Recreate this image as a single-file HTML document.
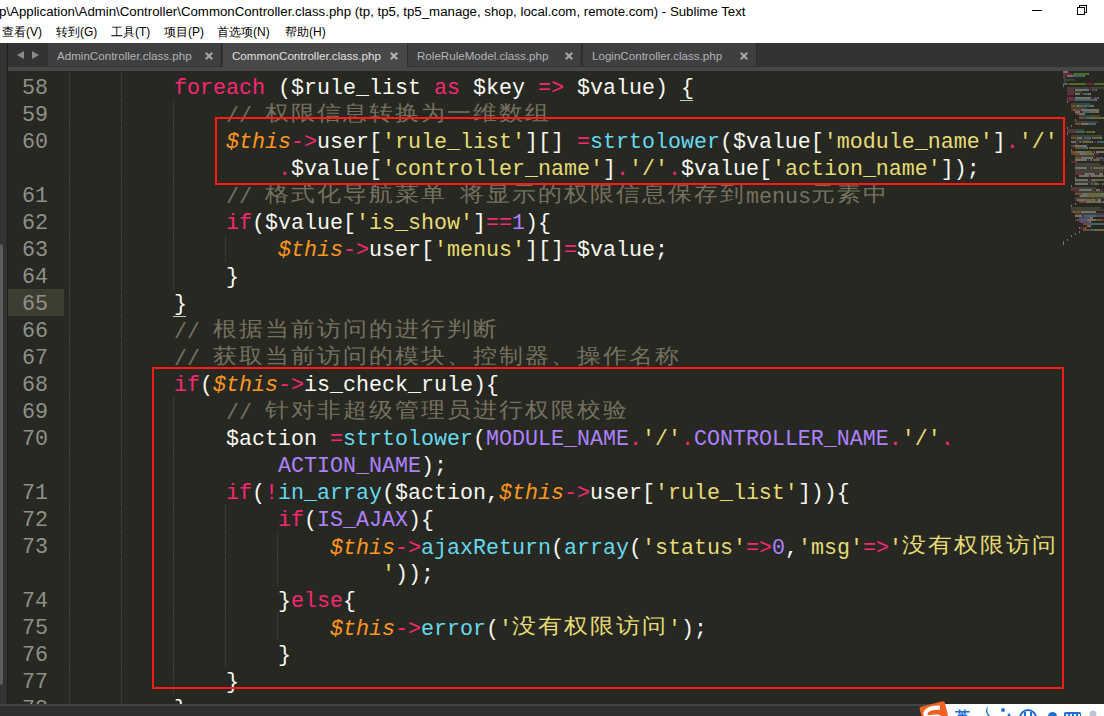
<!DOCTYPE html>
<html><head><meta charset="utf-8">
<style>
*{margin:0;padding:0;box-sizing:border-box}
html,body{width:1104px;height:716px;overflow:hidden;background:#272822;position:relative;font-family:"Liberation Sans",sans-serif}
#title{position:absolute;left:0;top:0;width:1104px;height:43px;background:#fff}
#ttl{position:absolute;left:-1px;top:4px;font-size:13.25px;color:#000;white-space:nowrap}
.mn{position:absolute;top:24px;font-size:12px;color:#000;white-space:nowrap}
#strip{position:absolute;left:0;top:43px;width:8px;height:661px;background:#333333;border-right:1px solid #1f1f1f}
#sb{position:absolute;left:0;top:244px;width:3px;height:441px;background:#5c5c5c;border-radius:0 3px 3px 0}
#tabbar{position:absolute;left:8px;top:43px;width:1096px;height:24px;background:#333333}
#arrows{position:absolute;left:8px;top:43px;width:40px;height:24px;background:#333}
.tab{position:absolute;top:43px;height:23px;background:#3f3f3f;border-right:1px solid #2a2a2a;font-size:11.6px;color:#b0b4b8;white-space:nowrap}
.tab.act{background:#484848;color:#e0e0e0;height:24px;border-right:1px solid #2e2e2e}
.tab span.x{position:absolute;top:5px;font-size:14px;font-weight:bold;color:#9a9a9a}
#band{position:absolute;left:8px;top:67px;width:1096px;height:4px;background:#474747}
#editor{position:absolute;left:8px;top:71px;width:1096px;height:633px;background:#272822;overflow:hidden}
#gutterhl{position:absolute;left:8px;top:289px;width:56px;height:27px;background:#3e3d32}
.ln{position:absolute;left:8px;width:40px;height:27px;line-height:27px;padding-top:2px;text-align:right;color:#8f908a;font-family:"Liberation Mono",monospace;font-size:21.66px}
.r{position:absolute;height:27px;line-height:27px;padding-top:2px;white-space:pre;color:#f8f8f2;font-family:"Liberation Mono",monospace;font-size:21.66px}
.g{position:absolute;width:1px;height:27px;background:repeating-linear-gradient(to bottom,#4b4b45 0,#4b4b45 1px,transparent 1px,transparent 2px)}
.k{color:#f92672}.s{color:#e6db74}.c{color:#75715e}.t{color:#fd971f;font-style:italic}.f{color:#66d9ef}.n{color:#ae81ff}
.ul{position:absolute;height:1px;width:13px;background:#c8c8c2}
.cj{font-size:24px;letter-spacing:2px;display:inline-block;transform:scaleY(0.88);transform-origin:50% 25%}
.box{position:absolute;border:2px solid #ff1a1a}
#status{position:absolute;left:0;top:704px;width:1104px;height:12px;background:#2f2f2f;border-top:2px solid #444}
#ime{position:absolute;left:944px;top:704px;width:166px;height:12px;background:#fff}
#minimap{position:absolute;left:1066px;top:71px;width:38px;height:180px}
</style></head><body>
<div id="title">
<div id="ttl">p\Application\Admin\Controller\CommonController.class.php (tp, tp5, tp5_manage, shop, local.com, remote.com) - Sublime Text</div>
<div style="position:absolute;left:1032px;top:10px;width:10px;height:1px;background:#000"></div>
<div style="position:absolute;left:1079px;top:5px;width:8px;height:8px;border:1px solid #000"></div>
<div style="position:absolute;left:1077px;top:7px;width:8px;height:8px;border:1px solid #000;background:#fff"></div>
<div class="mn" style="left:2px">查看(V)</div>
<div class="mn" style="left:56px">转到(G)</div>
<div class="mn" style="left:111px">工具(T)</div>
<div class="mn" style="left:164px">项目(P)</div>
<div class="mn" style="left:217px">首选项(N)</div>
<div class="mn" style="left:285px">帮助(H)</div>
</div>
<div id="tabbar"></div>
<div id="arrows">
<div style="position:absolute;left:9px;top:8px;width:0;height:0;border-top:4.5px solid transparent;border-bottom:4.5px solid transparent;border-right:7px solid #8a8a8a"></div>
<div style="position:absolute;left:24px;top:8px;width:0;height:0;border-top:4.5px solid transparent;border-bottom:4.5px solid transparent;border-left:7px solid #8a8a8a"></div>
</div>
<div class="tab" style="left:48px;width:174px;border-bottom-right-radius:3px"><span style="position:absolute;left:9px;top:6px">AdminController.class.php</span><svg style="position:absolute;left:157px;top:9px" width="8" height="8"><path d="M1.5 1.5L6.5 6.5M6.5 1.5L1.5 6.5" stroke="#a8a8a8" stroke-width="2" stroke-linecap="square"/></svg></div>
<div class="tab act" style="left:223px;width:185px"><span style="position:absolute;left:9px;top:6px">CommonController.class.php</span><svg style="position:absolute;left:167px;top:9px" width="8" height="8"><path d="M1.5 1.5L6.5 6.5M6.5 1.5L1.5 6.5" stroke="#b4b4b4" stroke-width="2" stroke-linecap="square"/></svg></div>
<div class="tab" style="left:408px;width:174px;border-bottom-left-radius:3px;border-bottom-right-radius:3px"><span style="position:absolute;left:9px;top:6px">RoleRuleModel.class.php</span><svg style="position:absolute;left:157px;top:9px" width="8" height="8"><path d="M1.5 1.5L6.5 6.5M6.5 1.5L1.5 6.5" stroke="#a8a8a8" stroke-width="2" stroke-linecap="square"/></svg></div>
<div class="tab" style="left:583px;width:174px;border-bottom-left-radius:3px;border-bottom-right-radius:3px"><span style="position:absolute;left:9px;top:6px">LoginController.class.php</span><svg style="position:absolute;left:157px;top:9px" width="8" height="8"><path d="M1.5 1.5L6.5 6.5M6.5 1.5L1.5 6.5" stroke="#a8a8a8" stroke-width="2" stroke-linecap="square"/></svg></div>
<div id="band"></div>
<div id="strip"></div>
<div id="sb"></div>
<div id="gutterhl"></div>
<div class="ln" style="top:73px">58</div>
<div class="ln" style="top:100px">59</div>
<div class="ln" style="top:127px">60</div>
<div class="ln" style="top:181px">61</div>
<div class="ln" style="top:208px">62</div>
<div class="ln" style="top:235px">63</div>
<div class="ln" style="top:262px">64</div>
<div class="ln" style="top:289px">65</div>
<div class="ln" style="top:316px">66</div>
<div class="ln" style="top:343px">67</div>
<div class="ln" style="top:370px">68</div>
<div class="ln" style="top:397px">69</div>
<div class="ln" style="top:424px">70</div>
<div class="ln" style="top:478px">71</div>
<div class="ln" style="top:505px">72</div>
<div class="ln" style="top:532px">73</div>
<div class="ln" style="top:586px">74</div>
<div class="ln" style="top:613px">75</div>
<div class="ln" style="top:640px">76</div>
<div class="ln" style="top:667px">77</div>
<div class="ln" style="top:694px">78</div>
<div class="g" style="top:73px;left:69px"></div>
<div class="g" style="top:73px;left:121px"></div>
<div class="g" style="top:100px;left:69px"></div>
<div class="g" style="top:100px;left:121px"></div>
<div class="g" style="top:100px;left:173px"></div>
<div class="g" style="top:127px;left:69px"></div>
<div class="g" style="top:127px;left:121px"></div>
<div class="g" style="top:127px;left:173px"></div>
<div class="g" style="top:154px;left:69px"></div>
<div class="g" style="top:154px;left:121px"></div>
<div class="g" style="top:154px;left:173px"></div>
<div class="g" style="top:181px;left:69px"></div>
<div class="g" style="top:181px;left:121px"></div>
<div class="g" style="top:181px;left:173px"></div>
<div class="g" style="top:208px;left:69px"></div>
<div class="g" style="top:208px;left:121px"></div>
<div class="g" style="top:208px;left:173px"></div>
<div class="g" style="top:235px;left:69px"></div>
<div class="g" style="top:235px;left:121px"></div>
<div class="g" style="top:235px;left:173px"></div>
<div class="g" style="top:235px;left:225px"></div>
<div class="g" style="top:262px;left:69px"></div>
<div class="g" style="top:262px;left:121px"></div>
<div class="g" style="top:262px;left:173px"></div>
<div class="g" style="top:289px;left:69px"></div>
<div class="g" style="top:289px;left:121px"></div>
<div class="g" style="top:316px;left:69px"></div>
<div class="g" style="top:316px;left:121px"></div>
<div class="g" style="top:343px;left:69px"></div>
<div class="g" style="top:343px;left:121px"></div>
<div class="g" style="top:370px;left:69px"></div>
<div class="g" style="top:370px;left:121px"></div>
<div class="g" style="top:397px;left:69px"></div>
<div class="g" style="top:397px;left:121px"></div>
<div class="g" style="top:397px;left:173px"></div>
<div class="g" style="top:424px;left:69px"></div>
<div class="g" style="top:424px;left:121px"></div>
<div class="g" style="top:424px;left:173px"></div>
<div class="g" style="top:451px;left:69px"></div>
<div class="g" style="top:451px;left:121px"></div>
<div class="g" style="top:451px;left:173px"></div>
<div class="g" style="top:478px;left:69px"></div>
<div class="g" style="top:478px;left:121px"></div>
<div class="g" style="top:478px;left:173px"></div>
<div class="g" style="top:505px;left:69px"></div>
<div class="g" style="top:505px;left:121px"></div>
<div class="g" style="top:505px;left:173px"></div>
<div class="g" style="top:505px;left:225px"></div>
<div class="g" style="top:532px;left:69px"></div>
<div class="g" style="top:532px;left:121px"></div>
<div class="g" style="top:532px;left:173px"></div>
<div class="g" style="top:532px;left:225px"></div>
<div class="g" style="top:532px;left:277px"></div>
<div class="g" style="top:559px;left:69px"></div>
<div class="g" style="top:559px;left:121px"></div>
<div class="g" style="top:559px;left:173px"></div>
<div class="g" style="top:559px;left:225px"></div>
<div class="g" style="top:559px;left:277px"></div>
<div class="g" style="top:586px;left:69px"></div>
<div class="g" style="top:586px;left:121px"></div>
<div class="g" style="top:586px;left:173px"></div>
<div class="g" style="top:586px;left:225px"></div>
<div class="g" style="top:613px;left:69px"></div>
<div class="g" style="top:613px;left:121px"></div>
<div class="g" style="top:613px;left:173px"></div>
<div class="g" style="top:613px;left:225px"></div>
<div class="g" style="top:613px;left:277px"></div>
<div class="g" style="top:640px;left:69px"></div>
<div class="g" style="top:640px;left:121px"></div>
<div class="g" style="top:640px;left:173px"></div>
<div class="g" style="top:640px;left:225px"></div>
<div class="g" style="top:667px;left:69px"></div>
<div class="g" style="top:667px;left:121px"></div>
<div class="g" style="top:667px;left:173px"></div>
<div class="g" style="top:694px;left:69px"></div>
<div class="g" style="top:694px;left:121px"></div>
<div class="r" style="top:73px;left:174px"><span class="k">foreach</span> ($rule_list <span class="k">as</span> $key <span class="k">=&gt;</span> $value) <span class="u">{</span></div>
<div class="r" style="top:100px;left:226px"><span class="c">// <span class="cj">权限信息转换为一维数组</span></span></div>
<div class="r" style="top:127px;left:226px"><span class="t">$this</span><span class="k">-&gt;</span>user[<span class="s">&#x27;rule_list&#x27;</span>][] <span class="k">=</span><span class="f">strtolower</span>($value[<span class="s">&#x27;module_name&#x27;</span>]<span class="k">.</span><span class="s">&#x27;/&#x27;</span></div>
<div class="r" style="top:154px;left:278px"><span class="k">.</span>$value[<span class="s">&#x27;controller_name&#x27;</span>]<span class="k">.</span><span class="s">&#x27;/&#x27;</span><span class="k">.</span>$value[<span class="s">&#x27;action_name&#x27;</span>]);</div>
<div class="r" style="top:181px;left:226px"><span class="c">// <span class="cj">格式化导航菜单</span> <span class="cj">将显示的权限信息保存到</span>menus<span class="cj">元素中</span></span></div>
<div class="r" style="top:208px;left:226px"><span class="k">if</span>($value[<span class="s">&#x27;is_show&#x27;</span>]<span class="k">==</span><span class="n">1</span>){</div>
<div class="r" style="top:235px;left:278px"><span class="t">$this</span><span class="k">-&gt;</span>user[<span class="s">&#x27;menus&#x27;</span>][]<span class="k">=</span>$value;</div>
<div class="r" style="top:262px;left:226px">}</div>
<div class="r" style="top:289px;left:174px"><span class="u">}</span></div>
<div class="r" style="top:316px;left:174px"><span class="c">// <span class="cj">根据当前访问的进行判断</span></span></div>
<div class="r" style="top:343px;left:174px"><span class="c">// <span class="cj">获取当前访问的模块、控制器、操作名称</span></span></div>
<div class="r" style="top:370px;left:174px"><span class="k">if</span>(<span class="t">$this</span><span class="k">-&gt;</span>is_check_rule){</div>
<div class="r" style="top:397px;left:226px"><span class="c">// <span class="cj">针对非超级管理员进行权限校验</span></span></div>
<div class="r" style="top:424px;left:226px">$action <span class="k">=</span><span class="f">strtolower</span>(<span class="n">MODULE_NAME</span><span class="k">.</span><span class="s">&#x27;/&#x27;</span><span class="k">.</span><span class="n">CONTROLLER_NAME</span><span class="k">.</span><span class="s">&#x27;/&#x27;</span><span class="k">.</span></div>
<div class="r" style="top:451px;left:278px"><span class="n">ACTION_NAME</span>);</div>
<div class="r" style="top:478px;left:226px"><span class="k">if</span>(<span class="k">!</span><span class="f">in_array</span>($action,<span class="t">$this</span><span class="k">-&gt;</span>user[<span class="s">&#x27;rule_list&#x27;</span>])){</div>
<div class="r" style="top:505px;left:278px"><span class="k">if</span>(<span class="n">IS_AJAX</span>){</div>
<div class="r" style="top:532px;left:330px"><span class="t">$this</span><span class="k">-&gt;</span><span class="f">ajaxReturn</span>(<span class="f">array</span>(<span class="s">&#x27;status&#x27;</span><span class="k">=&gt;</span><span class="n">0</span>,<span class="s">&#x27;msg&#x27;</span><span class="k">=&gt;</span><span class="s">&#x27;<span class="cj">没有权限访问</span></span></div>
<div class="r" style="top:559px;left:382px"><span class="s">&#x27;</span>));</div>
<div class="r" style="top:586px;left:278px">}<span class="k">else</span>{</div>
<div class="r" style="top:613px;left:330px"><span class="t">$this</span><span class="k">-&gt;</span><span class="f">error</span>(<span class="s">&#x27;<span class="cj">没有权限访问</span>&#x27;</span>);</div>
<div class="r" style="top:640px;left:278px">}</div>
<div class="r" style="top:667px;left:226px">}</div>
<div class="r" style="top:694px;left:174px">}</div>
<svg style="position:absolute;left:1063px;top:71px" width="41" height="180" opacity="0.5"><rect x="0" y="0.3" width="5" height="1.4" fill="#f8f8f2"/><rect x="0" y="2.3" width="9" height="1.4" fill="#f92672"/><rect x="10" y="2.3" width="15" height="1.4" fill="#a6e22e"/><rect x="25" y="2.3" width="1" height="1.4" fill="#f8f8f2"/><rect x="0" y="4.3" width="3" height="1.4" fill="#f92672"/><rect x="4" y="4.3" width="6" height="1.4" fill="#f8f8f2"/><rect x="10" y="4.3" width="11" height="1.4" fill="#66d9ef"/><rect x="21" y="4.3" width="1" height="1.4" fill="#f8f8f2"/><rect x="0" y="6.3" width="3" height="1.4" fill="#75715e"/><rect x="1" y="8.3" width="11" height="1.4" fill="#75715e"/><rect x="1" y="10.3" width="2" height="1.4" fill="#75715e"/><rect x="0" y="12.3" width="5" height="1.4" fill="#66d9ef"/><rect x="6" y="12.3" width="17" height="1.4" fill="#a6e22e"/><rect x="24" y="12.3" width="6" height="1.4" fill="#f92672"/><rect x="31" y="12.3" width="10" height="1.4" fill="#a6e22e"/><rect x="0" y="14.3" width="1" height="1.4" fill="#f8f8f2"/><rect x="4" y="16.3" width="21" height="1.4" fill="#75715e"/><rect x="26" y="16.3" width="15" height="1.4" fill="#75715e"/><rect x="4" y="18.3" width="7" height="1.4" fill="#f92672"/><rect x="12" y="18.3" width="14" height="1.4" fill="#f8f8f2"/><rect x="27" y="18.3" width="1" height="1.4" fill="#f92672"/><rect x="29" y="18.3" width="4" height="1.4" fill="#ae81ff"/><rect x="33" y="18.3" width="1" height="1.4" fill="#f8f8f2"/><rect x="4" y="20.3" width="15" height="1.4" fill="#75715e"/><rect x="4" y="22.3" width="7" height="1.4" fill="#f92672"/><rect x="12" y="22.3" width="5" height="1.4" fill="#f8f8f2"/><rect x="18" y="22.3" width="1" height="1.4" fill="#f92672"/><rect x="20" y="22.3" width="5" height="1.4" fill="#66d9ef"/><rect x="25" y="22.3" width="3" height="1.4" fill="#f8f8f2"/><rect x="4" y="26.3" width="7" height="1.4" fill="#f92672"/><rect x="12" y="26.3" width="16" height="1.4" fill="#f8f8f2"/><rect x="29" y="26.3" width="1" height="1.4" fill="#f92672"/><rect x="31" y="26.3" width="4" height="1.4" fill="#ae81ff"/><rect x="35" y="26.3" width="1" height="1.4" fill="#f8f8f2"/><rect x="4" y="28.3" width="6" height="1.4" fill="#f92672"/><rect x="11" y="28.3" width="21" height="1.4" fill="#66d9ef"/><rect x="32" y="28.3" width="2" height="1.4" fill="#f8f8f2"/><rect x="4" y="30.3" width="1" height="1.4" fill="#f8f8f2"/><rect x="8" y="32.3" width="20" height="1.4" fill="#75715e"/><rect x="8" y="34.3" width="6" height="1.4" fill="#fd971f"/><rect x="14" y="34.3" width="2" height="1.4" fill="#f8f8f2"/><rect x="16" y="34.3" width="12" height="1.4" fill="#66d9ef"/><rect x="28" y="34.3" width="3" height="1.4" fill="#f8f8f2"/><rect x="8" y="36.3" width="16" height="1.4" fill="#75715e"/><rect x="8" y="38.3" width="2" height="1.4" fill="#f92672"/><rect x="10" y="38.3" width="1" height="1.4" fill="#f8f8f2"/><rect x="11" y="38.3" width="6" height="1.4" fill="#fd971f"/><rect x="17" y="38.3" width="1" height="1.4" fill="#f92672"/><rect x="18" y="38.3" width="18" height="1.4" fill="#f8f8f2"/><rect x="12" y="40.3" width="5" height="1.4" fill="#f8f8f2"/><rect x="18" y="40.3" width="1" height="1.4" fill="#f92672"/><rect x="20" y="40.3" width="7" height="1.4" fill="#66d9ef"/><rect x="27" y="40.3" width="1" height="1.4" fill="#f8f8f2"/><rect x="28" y="40.3" width="6" height="1.4" fill="#e6db74"/><rect x="34" y="40.3" width="2" height="1.4" fill="#f8f8f2"/><rect x="12" y="42.3" width="2" height="1.4" fill="#f92672"/><rect x="14" y="42.3" width="1" height="1.4" fill="#f8f8f2"/><rect x="15" y="42.3" width="1" height="1.4" fill="#f92672"/><rect x="16" y="42.3" width="6" height="1.4" fill="#f8f8f2"/><rect x="16" y="44.3" width="21" height="1.4" fill="#75715e"/><rect x="16" y="46.3" width="5" height="1.4" fill="#fd971f"/><rect x="21" y="46.3" width="1" height="1.4" fill="#f92672"/><rect x="22" y="46.3" width="6" height="1.4" fill="#66d9ef"/><rect x="28" y="46.3" width="1" height="1.4" fill="#f8f8f2"/><rect x="29" y="46.3" width="11" height="1.4" fill="#e6db74"/><rect x="40" y="46.3" width="1" height="1.4" fill="#f8f8f2"/><rect x="12" y="48.3" width="1" height="1.4" fill="#f8f8f2"/><rect x="12" y="50.3" width="23" height="1.4" fill="#75715e"/><rect x="12" y="52.3" width="5" height="1.4" fill="#fd971f"/><rect x="17" y="52.3" width="1" height="1.4" fill="#f92672"/><rect x="18" y="52.3" width="7" height="1.4" fill="#f8f8f2"/><rect x="25" y="52.3" width="8" height="1.4" fill="#66d9ef"/><rect x="8" y="54.3" width="1" height="1.4" fill="#f8f8f2"/><rect x="4" y="56.3" width="1" height="1.4" fill="#f8f8f2"/><rect x="4" y="58.3" width="17" height="1.4" fill="#75715e"/><rect x="4" y="60.3" width="9" height="1.4" fill="#f92672"/><rect x="13" y="60.3" width="9" height="1.4" fill="#66d9ef"/><rect x="23" y="60.3" width="7" height="1.4" fill="#a6e22e"/><rect x="30" y="60.3" width="2" height="1.4" fill="#f8f8f2"/><rect x="4" y="62.3" width="1" height="1.4" fill="#f8f8f2"/><rect x="8" y="64.3" width="31" height="1.4" fill="#75715e"/><rect x="8" y="66.3" width="5" height="1.4" fill="#fd971f"/><rect x="13" y="66.3" width="1" height="1.4" fill="#f92672"/><rect x="14" y="66.3" width="5" height="1.4" fill="#f8f8f2"/><rect x="19" y="66.3" width="1" height="1.4" fill="#f92672"/><rect x="21" y="66.3" width="6" height="1.4" fill="#66d9ef"/><rect x="27" y="66.3" width="1" height="1.4" fill="#f8f8f2"/><rect x="29" y="66.3" width="8" height="1.4" fill="#e6db74"/><rect x="37" y="66.3" width="2" height="1.4" fill="#f8f8f2"/><rect x="12" y="68.3" width="15" height="1.4" fill="#75715e"/><rect x="8" y="70.3" width="5" height="1.4" fill="#f8f8f2"/><rect x="14" y="70.3" width="1" height="1.4" fill="#f92672"/><rect x="16" y="70.3" width="1" height="1.4" fill="#66d9ef"/><rect x="17" y="70.3" width="1" height="1.4" fill="#f8f8f2"/><rect x="19" y="70.3" width="10" height="1.4" fill="#e6db74"/><rect x="29" y="70.3" width="1" height="1.4" fill="#f8f8f2"/><rect x="31" y="70.3" width="2" height="1.4" fill="#f92672"/><rect x="34" y="70.3" width="7" height="1.4" fill="#66d9ef"/><rect x="12" y="72.3" width="3" height="1.4" fill="#75715e"/><rect x="8" y="74.3" width="2" height="1.4" fill="#f92672"/><rect x="10" y="74.3" width="1" height="1.4" fill="#f8f8f2"/><rect x="11" y="74.3" width="1" height="1.4" fill="#f92672"/><rect x="12" y="74.3" width="12" height="1.4" fill="#f8f8f2"/><rect x="12" y="76.3" width="6" height="1.4" fill="#fd971f"/><rect x="18" y="76.3" width="1" height="1.4" fill="#f92672"/><rect x="19" y="76.3" width="5" height="1.4" fill="#66d9ef"/><rect x="24" y="76.3" width="1" height="1.4" fill="#f8f8f2"/><rect x="26" y="76.3" width="15" height="1.4" fill="#e6db74"/><rect x="8" y="78.3" width="1" height="1.4" fill="#f8f8f2"/><rect x="8" y="80.3" width="5" height="1.4" fill="#fd971f"/><rect x="13" y="80.3" width="7" height="1.4" fill="#f8f8f2"/><rect x="20" y="80.3" width="8" height="1.4" fill="#e6db74"/><rect x="28" y="80.3" width="1" height="1.4" fill="#f8f8f2"/><rect x="30" y="80.3" width="1" height="1.4" fill="#f92672"/><rect x="31" y="80.3" width="1" height="1.4" fill="#f8f8f2"/><rect x="33" y="80.3" width="8" height="1.4" fill="#f8f8f2"/><rect x="8" y="82.3" width="2" height="1.4" fill="#f92672"/><rect x="10" y="82.3" width="7" height="1.4" fill="#fd971f"/><rect x="17" y="82.3" width="6" height="1.4" fill="#f8f8f2"/><rect x="23" y="82.3" width="7" height="1.4" fill="#e6db74"/><rect x="30" y="82.3" width="1" height="1.4" fill="#f8f8f2"/><rect x="32" y="82.3" width="4" height="1.4" fill="#f92672"/><rect x="12" y="84.3" width="20" height="1.4" fill="#75715e"/><rect x="12" y="86.3" width="5" height="1.4" fill="#fd971f"/><rect x="17" y="86.3" width="1" height="1.4" fill="#f92672"/><rect x="18" y="86.3" width="12" height="1.4" fill="#f8f8f2"/><rect x="31" y="86.3" width="1" height="1.4" fill="#f92672"/><rect x="33" y="86.3" width="6" height="1.4" fill="#ae81ff"/><rect x="39" y="86.3" width="1" height="1.4" fill="#f8f8f2"/><rect x="12" y="88.3" width="12" height="1.4" fill="#f8f8f2"/><rect x="25" y="88.3" width="1" height="1.4" fill="#f92672"/><rect x="27" y="88.3" width="1" height="1.4" fill="#66d9ef"/><rect x="28" y="88.3" width="1" height="1.4" fill="#f8f8f2"/><rect x="30" y="88.3" width="7" height="1.4" fill="#e6db74"/><rect x="38" y="88.3" width="1" height="1.4" fill="#f92672"/><rect x="40" y="88.3" width="1" height="1.4" fill="#66d9ef"/><rect x="8" y="90.3" width="6" height="1.4" fill="#f92672"/><rect x="12" y="92.3" width="25" height="1.4" fill="#75715e"/><rect x="12" y="94.3" width="29" height="1.4" fill="#75715e"/><rect x="12" y="96.3" width="12" height="1.4" fill="#f8f8f2"/><rect x="25" y="96.3" width="1" height="1.4" fill="#f92672"/><rect x="27" y="96.3" width="1" height="1.4" fill="#66d9ef"/><rect x="28" y="96.3" width="1" height="1.4" fill="#f8f8f2"/><rect x="30" y="96.3" width="11" height="1.4" fill="#e6db74"/><rect x="12" y="98.3" width="29" height="1.4" fill="#75715e"/><rect x="12" y="100.3" width="28" height="1.4" fill="#75715e"/><rect x="12" y="102.3" width="8" height="1.4" fill="#f92672"/><rect x="21" y="102.3" width="11" height="1.4" fill="#f8f8f2"/><rect x="33" y="102.3" width="2" height="1.4" fill="#f92672"/><rect x="36" y="102.3" width="4" height="1.4" fill="#f8f8f2"/><rect x="16" y="104.3" width="10" height="1.4" fill="#f8f8f2"/><rect x="26" y="104.3" width="2" height="1.4" fill="#f92672"/><rect x="28" y="104.3" width="10" height="1.4" fill="#f8f8f2"/><rect x="38" y="104.3" width="3" height="1.4" fill="#e6db74"/><rect x="12" y="106.3" width="1" height="1.4" fill="#f8f8f2"/><rect x="12" y="108.3" width="13" height="1.4" fill="#f8f8f2"/><rect x="26" y="108.3" width="1" height="1.4" fill="#f92672"/><rect x="28" y="108.3" width="1" height="1.4" fill="#66d9ef"/><rect x="29" y="108.3" width="2" height="1.4" fill="#f8f8f2"/><rect x="31" y="108.3" width="10" height="1.4" fill="#e6db74"/><rect x="12" y="110.3" width="22" height="1.4" fill="#75715e"/><rect x="12" y="112.3" width="13" height="1.4" fill="#f8f8f2"/><rect x="26" y="112.3" width="1" height="1.4" fill="#f92672"/><rect x="28" y="112.3" width="1" height="1.4" fill="#66d9ef"/><rect x="29" y="112.3" width="1" height="1.4" fill="#f8f8f2"/><rect x="31" y="112.3" width="5" height="1.4" fill="#e6db74"/><rect x="37" y="112.3" width="1" height="1.4" fill="#f92672"/><rect x="39" y="112.3" width="2" height="1.4" fill="#66d9ef"/><rect x="8" y="114.3" width="1" height="1.4" fill="#f8f8f2"/><rect x="8" y="116.3" width="25" height="1.4" fill="#75715e"/><rect x="8" y="118.3" width="7" height="1.4" fill="#f92672"/><rect x="16" y="118.3" width="13" height="1.4" fill="#f8f8f2"/><rect x="30" y="118.3" width="2" height="1.4" fill="#f92672"/><rect x="33" y="118.3" width="4" height="1.4" fill="#f8f8f2"/><rect x="38" y="118.3" width="2" height="1.4" fill="#f92672"/><rect x="12" y="120.3" width="29" height="1.4" fill="#75715e"/><rect x="12" y="122.3" width="6" height="1.4" fill="#fd971f"/><rect x="18" y="122.3" width="1" height="1.4" fill="#f92672"/><rect x="19" y="122.3" width="5" height="1.4" fill="#f8f8f2"/><rect x="24" y="122.3" width="14" height="1.4" fill="#e6db74"/><rect x="38" y="122.3" width="3" height="1.4" fill="#f8f8f2"/><rect x="16" y="124.3" width="1" height="1.4" fill="#f92672"/><rect x="17" y="124.3" width="7" height="1.4" fill="#f8f8f2"/><rect x="24" y="124.3" width="17" height="1.4" fill="#e6db74"/><rect x="12" y="126.3" width="29" height="1.4" fill="#75715e"/><rect x="12" y="128.3" width="2" height="1.4" fill="#f92672"/><rect x="14" y="128.3" width="7" height="1.4" fill="#f8f8f2"/><rect x="21" y="128.3" width="9" height="1.4" fill="#e6db74"/><rect x="30" y="128.3" width="2" height="1.4" fill="#f8f8f2"/><rect x="32" y="128.3" width="2" height="1.4" fill="#f92672"/><rect x="34" y="128.3" width="1" height="1.4" fill="#ae81ff"/><rect x="35" y="128.3" width="3" height="1.4" fill="#f8f8f2"/><rect x="16" y="130.3" width="6" height="1.4" fill="#fd971f"/><rect x="22" y="130.3" width="1" height="1.4" fill="#f92672"/><rect x="23" y="130.3" width="5" height="1.4" fill="#f8f8f2"/><rect x="28" y="130.3" width="7" height="1.4" fill="#e6db74"/><rect x="35" y="130.3" width="3" height="1.4" fill="#f8f8f2"/><rect x="38" y="130.3" width="1" height="1.4" fill="#f92672"/><rect x="39" y="130.3" width="2" height="1.4" fill="#f8f8f2"/><rect x="12" y="132.3" width="1" height="1.4" fill="#f8f8f2"/><rect x="8" y="134.3" width="1" height="1.4" fill="#f8f8f2"/><rect x="8" y="136.3" width="30" height="1.4" fill="#75715e"/><rect x="8" y="138.3" width="33" height="1.4" fill="#75715e"/><rect x="8" y="140.3" width="2" height="1.4" fill="#f92672"/><rect x="10" y="140.3" width="1" height="1.4" fill="#f8f8f2"/><rect x="11" y="140.3" width="6" height="1.4" fill="#fd971f"/><rect x="17" y="140.3" width="1" height="1.4" fill="#f92672"/><rect x="18" y="140.3" width="15" height="1.4" fill="#f8f8f2"/><rect x="12" y="142.3" width="29" height="1.4" fill="#75715e"/><rect x="12" y="144.3" width="7" height="1.4" fill="#f8f8f2"/><rect x="20" y="144.3" width="1" height="1.4" fill="#f92672"/><rect x="21" y="144.3" width="10" height="1.4" fill="#66d9ef"/><rect x="31" y="144.3" width="1" height="1.4" fill="#f8f8f2"/><rect x="32" y="144.3" width="9" height="1.4" fill="#ae81ff"/><rect x="16" y="146.3" width="11" height="1.4" fill="#ae81ff"/><rect x="27" y="146.3" width="3" height="1.4" fill="#f8f8f2"/><rect x="12" y="148.3" width="2" height="1.4" fill="#f92672"/><rect x="14" y="148.3" width="1" height="1.4" fill="#f8f8f2"/><rect x="15" y="148.3" width="1" height="1.4" fill="#f92672"/><rect x="16" y="148.3" width="8" height="1.4" fill="#66d9ef"/><rect x="24" y="148.3" width="9" height="1.4" fill="#f8f8f2"/><rect x="33" y="148.3" width="6" height="1.4" fill="#fd971f"/><rect x="39" y="148.3" width="2" height="1.4" fill="#f92672"/><rect x="16" y="150.3" width="2" height="1.4" fill="#f92672"/><rect x="18" y="150.3" width="1" height="1.4" fill="#f8f8f2"/><rect x="19" y="150.3" width="7" height="1.4" fill="#ae81ff"/><rect x="26" y="150.3" width="2" height="1.4" fill="#f8f8f2"/><rect x="20" y="152.3" width="6" height="1.4" fill="#fd971f"/><rect x="26" y="152.3" width="1" height="1.4" fill="#f92672"/><rect x="27" y="152.3" width="10" height="1.4" fill="#66d9ef"/><rect x="37" y="152.3" width="1" height="1.4" fill="#f8f8f2"/><rect x="38" y="152.3" width="3" height="1.4" fill="#66d9ef"/><rect x="24" y="154.3" width="1" height="1.4" fill="#e6db74"/><rect x="25" y="154.3" width="3" height="1.4" fill="#f8f8f2"/><rect x="16" y="156.3" width="1" height="1.4" fill="#f8f8f2"/><rect x="17" y="156.3" width="5" height="1.4" fill="#f92672"/><rect x="22" y="156.3" width="1" height="1.4" fill="#f8f8f2"/><rect x="20" y="158.3" width="6" height="1.4" fill="#fd971f"/><rect x="26" y="158.3" width="1" height="1.4" fill="#f92672"/><rect x="27" y="158.3" width="5" height="1.4" fill="#66d9ef"/><rect x="32" y="158.3" width="1" height="1.4" fill="#f8f8f2"/><rect x="33" y="158.3" width="8" height="1.4" fill="#e6db74"/><rect x="16" y="160.3" width="1" height="1.4" fill="#f8f8f2"/><rect x="12" y="162.3" width="1" height="1.4" fill="#f8f8f2"/><rect x="8" y="164.3" width="1" height="1.4" fill="#f8f8f2"/><rect x="4" y="168.3" width="1" height="1.4" fill="#f8f8f2"/><rect x="0" y="170.3" width="1" height="1.4" fill="#f8f8f2"/><rect x="0" y="172.3" width="1" height="1.4" fill="#f8f8f2"/></svg>
<div class="ul" style="left:680px;top:100px"></div>
<div class="ul" style="left:173px;top:316px"></div>
<div class="box" style="left:215px;top:117px;width:850px;height:68px"></div>
<div class="box" style="left:152px;top:367px;width:912px;height:322px"></div>
<div id="status"></div>
<div id="ime"></div>
<svg style="position:absolute;left:918px;top:698px" width="186" height="18" viewBox="0 0 186 18">
<g transform="translate(-2 1) rotate(-14 17 14)"><rect x="5" y="5" width="26" height="24" rx="2" fill="#f26122"/><path d="M25 10.5 C 14 7, 7 11, 10 16 C 12 19, 23 16, 23 22" stroke="#fff" stroke-width="4.2" fill="none"/></g>
<text x="37" y="24" font-family="Liberation Sans" font-size="14.5" font-weight="bold" fill="#1f6fd0">英</text>
<path d="M70 18 Q 66 12 70 8 Q 68 14 72 18 Z" fill="#1f6fd0"/>
<circle cx="85" cy="12" r="2" fill="#1f6fd0"/><circle cx="91" cy="17" r="1.5" fill="#1f6fd0"/>
<circle cx="110" cy="20" r="8" stroke="#1f6fd0" stroke-width="2" fill="none"/>
<rect x="106" y="14" width="2" height="4" fill="#1f6fd0"/><rect x="112" y="14" width="2" height="4" fill="#1f6fd0"/>
<rect x="130" y="14" width="9" height="14" rx="4.5" fill="#1f6fd0"/>
<rect x="146" y="14" width="17" height="10" rx="1.5" fill="#1f6fd0"/>
<rect x="148" y="16" width="2" height="2" fill="#fff"/><rect x="152" y="16" width="2" height="2" fill="#fff"/><rect x="156" y="16" width="2" height="2" fill="#fff"/><rect x="160" y="16" width="2" height="2" fill="#fff"/>
<circle cx="175" cy="16" r="3.5" fill="#b9c3d6"/>
</svg>
</body></html>
